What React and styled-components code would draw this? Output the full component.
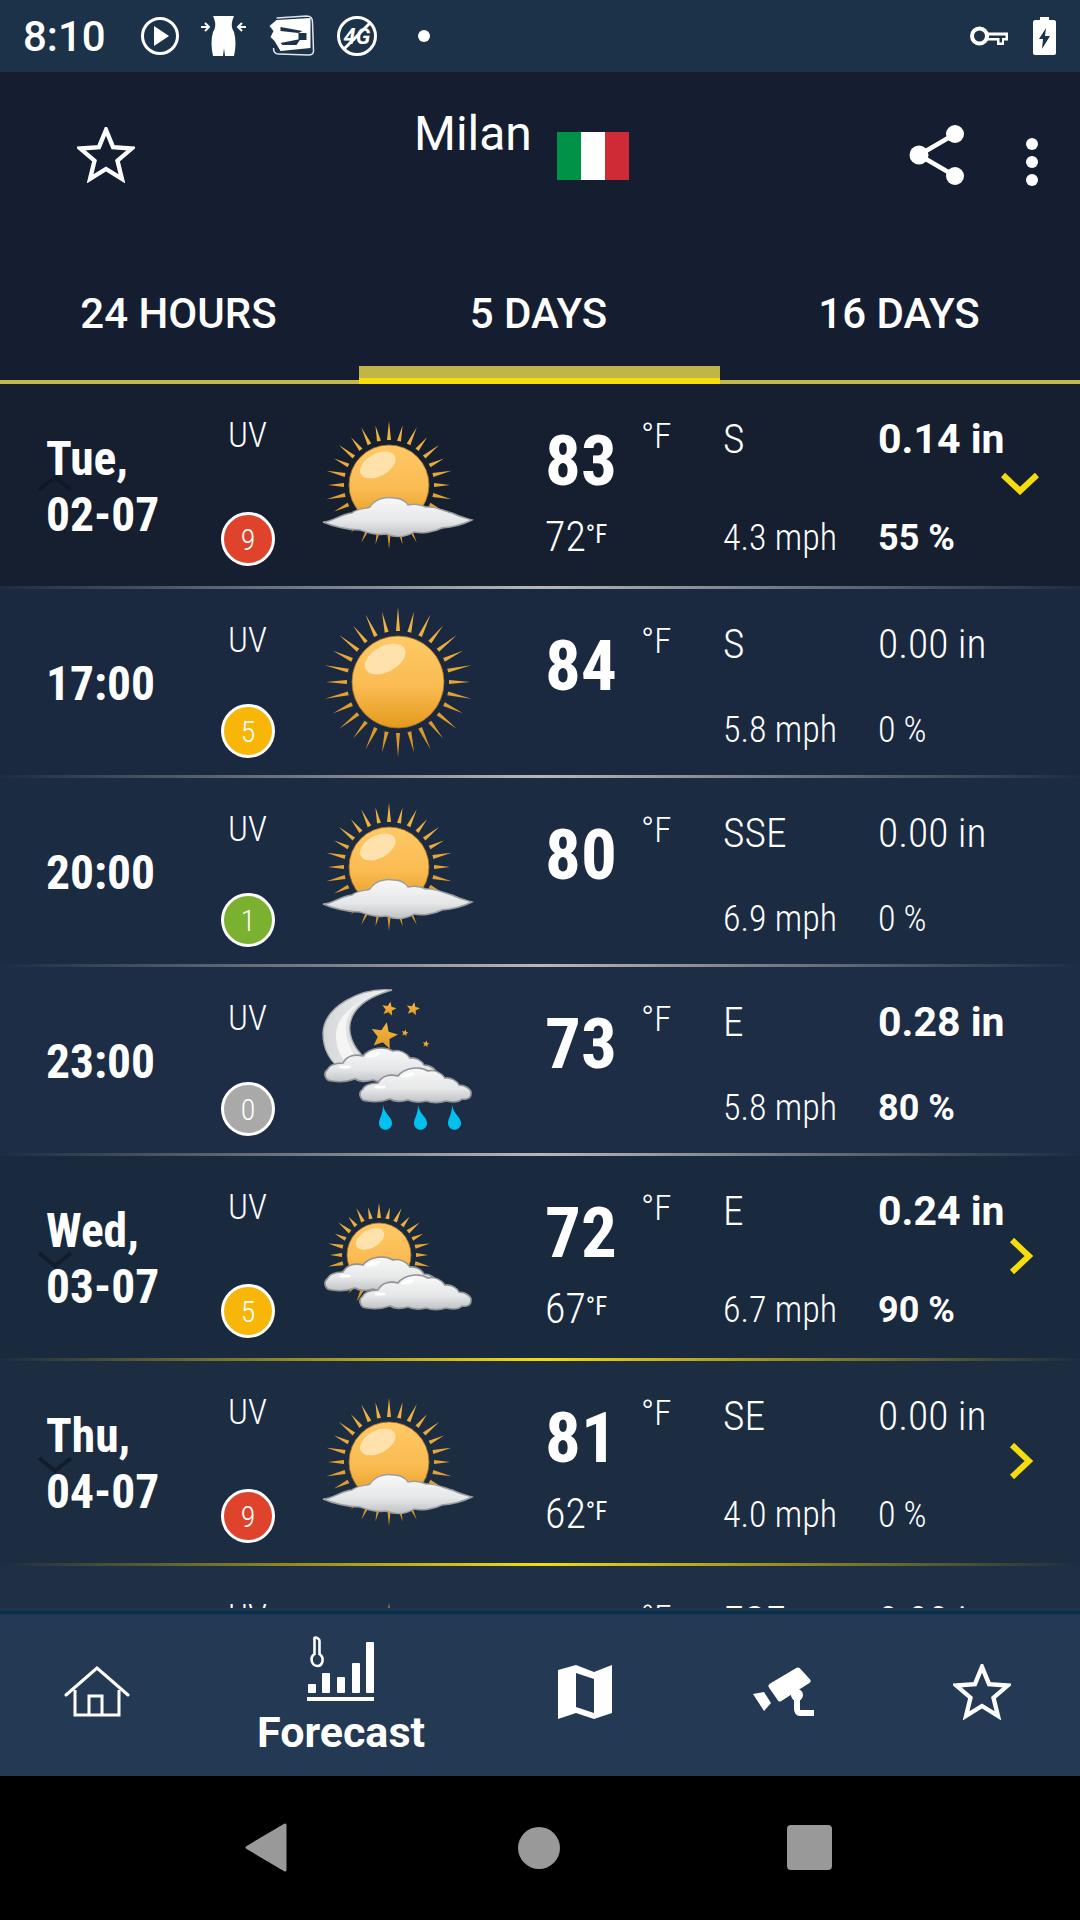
import React from "react";
import styled, { createGlobalStyle, css } from "styled-components";

const GlobalStyle = createGlobalStyle`
  html, body { margin: 0; padding: 0; background: #000; }
  body { font-family: Roboto, "Noto Sans", sans-serif; color: #fff; }
`;

const condensed = css`
  font-family: Roboto, sans-serif;
  font-stretch: 75%;
`;

const Screen = styled.div`
  width: 1080px;
  height: 1920px;
  display: flex;
  flex-direction: column;
  overflow: hidden;
`;

const StatusBar = styled.div`
  height: 72px;
  flex: none;
  background: #1c3249;
  display: flex;
  align-items: center;
  padding: 0 24px 0 23px;
  box-sizing: border-box;
`;

const Clock = styled.span`
  font-size: 42px;
  font-weight: 500;
  width: 117px;
`;

const StatusIcons = styled.div`
  display: flex;
  align-items: center;
  gap: 21px;
  flex: 1;
`;

const StatusDot = styled.div`
  width: 12px;
  height: 12px;
  margin-left: 19px;
  border-radius: 50%;
  background: #fff;
`;

const Header = styled.div`
  height: 168px;
  flex: none;
  background: #151e30;
  display: grid;
  grid-template-columns: 414px 143px 1fr auto;
  padding-right: 42px;
`;

const StarButton = styled.div`
  padding: 55px 0 0 77px;
`;

const City = styled.div`
  font-size: 48px;
  line-height: 56px;
  padding-top: 34px;
`;

const Flag = styled.div`
  width: 72px;
  height: 48px;
  margin-top: 60px;
  display: grid;
  grid-template-columns: repeat(3, 1fr);
`;

const FlagStripe = styled.div`
  background: ${(p) => p.$color};
`;

const HeaderActions = styled.div`
  display: flex;
  gap: 61px;
  padding-top: 53px;
  align-items: flex-start;
`;

const Dots = styled.div`
  display: flex;
  flex-direction: column;
  gap: 6px;
  padding-top: 13px;
`;

const Dot = styled.div`
  width: 12px;
  height: 12px;
  border-radius: 50%;
  background: #fff;
`;

const Tabs = styled.div`
  height: 144px;
  flex: none;
  background: #151e30;
  display: grid;
  grid-template-columns: 359px 361px 360px;
`;

const Tab = styled.div`
  font-size: 42px;
  font-weight: 500;
  text-align: center;
  line-height: 50px;
  padding: 49px 2px 0 0;
  box-sizing: border-box;
  ${(p) =>
    p.$active
      ? css`
          background: linear-gradient(#c2b548, #c2b548) 0 126px / 100% 12px no-repeat,
            linear-gradient(#f5dc0d, #f5dc0d) 0 138px / 100% 6px no-repeat;
        `
      : css`
          border-bottom: 4px solid #c5b84b;
        `}
`;

const List = styled.div`
  height: 1224px;
  flex: none;
  overflow: hidden;
  background: #1c2c42;
`;

const Row = styled.div`
  position: relative;
  height: ${(p) => (p.$tall ? 202 : 186)}px;
  background: ${(p) => p.$bg};
  display: grid;
  grid-template-columns: 175px 54px 270px 96px 82px 155px 1fr;
  grid-template-rows: ${(p) => (p.$tall ? 120 : 107)}px 1fr;
  padding-left: 46px;
  box-sizing: border-box;
`;

const Divider = styled.div`
  height: 3px;
  background: ${(p) =>
    p.$gold
      ? "linear-gradient(90deg, rgba(245,220,13,0) 0%, #f5dc0d 50%, rgba(245,220,13,0) 100%)"
      : "linear-gradient(90deg, rgba(190,190,190,0) 0%, #b8b8b8 50%, rgba(190,190,190,0) 100%)"};
`;

const DateCell = styled.div`
  ${condensed}
  grid-column: 1;
  grid-row: 1 / 3;
  align-self: center;
  font-size: 47.5px;
  font-weight: 700;
  line-height: 56px;
  padding-top: 4px;
  white-space: pre-line;
  position: relative;
`;

const UvLabel = styled.div`
  ${condensed}
  grid-column: 2;
  grid-row: 1;
  text-align: center;
  font-size: 35px;
  font-weight: 300;
  line-height: 40px;
  padding: 32px 1px 0 0;
`;

const Badge = styled.div`
  ${condensed}
  grid-column: 2;
  grid-row: 2;
  width: 54px;
  height: 54px;
  margin-top: 8px;
  box-sizing: border-box;
  border: 3px solid #fff;
  border-radius: 50%;
  background: ${(p) => p.$color};
  display: flex;
  align-items: center;
  justify-content: center;
  font-size: 30px;
  font-weight: 300;
`;

const IconCell = styled.div`
  grid-column: 3;
  grid-row: 1 / 3;
  padding: ${(p) => (p.$tall ? 26 : 14)}px 0 0 43px;
`;

const HighTemp = styled.div`
  ${condensed}
  grid-column: 4;
  grid-row: 1;
  font-size: 71px;
  font-weight: 700;
  line-height: 80px;
  padding-top: 37px;
`;

const LowTemp = styled.div`
  ${condensed}
  grid-column: 4;
  grid-row: 2;
  font-size: 42px;
  font-weight: 300;
  line-height: 48px;
  padding-top: 7px;
  white-space: nowrap;

  small {
    font-size: 25px;
    font-weight: 400;
    vertical-align: 8px;
  }
`;

const Unit = styled.div`
  ${condensed}
  grid-column: 5;
  grid-row: 1;
  font-size: 35px;
  font-weight: 300;
  line-height: 40px;
  padding-top: 33px;
`;

const TopValue = styled.div`
  ${condensed}
  grid-column: ${(p) => p.$col};
  grid-row: 1;
  font-size: ${(p) => (p.$bold ? 41 : 41.5)}px;
  font-stretch: ${(p) => (p.$bold ? 100 : 75)}%;
  font-weight: ${(p) => (p.$bold ? 700 : 300)};
  line-height: 44px;
  padding-top: 33px;
  white-space: nowrap;
`;

const BottomValue = styled.div`
  ${condensed}
  grid-column: ${(p) => p.$col};
  grid-row: 2;
  font-size: 36px;
  font-stretch: ${(p) => (p.$bold ? 100 : 75)}%;
  font-weight: ${(p) => (p.$bold ? 700 : 300)};
  line-height: 40px;
  padding-top: 14px;
  white-space: nowrap;
`;

const Chevron = styled.svg`
  position: absolute;
  left: ${(p) => p.$x}px;
  top: ${(p) => p.$y}px;
`;

const Nav = styled.div`
  height: 168px;
  flex: none;
  box-sizing: border-box;
  background: #243a54;
  border-top: 3px solid #20364f;
  position: relative;
  display: grid;
  grid-template-columns: 194px 294px 194px 202px 196px;
`;

const NavStripe = styled.div`
  position: absolute;
  top: 0;
  left: 0;
  right: 0;
  height: 3px;
  background: #04304c;
`;

const NavItem = styled.div`
  display: flex;
  flex-direction: column;
  align-items: center;
  padding-top: ${(p) => p.$top}px;
`;

const NavLabel = styled.div`
  font-size: 43px;
  font-weight: 700;
  line-height: 46px;
  margin-top: 7px;
`;

const SoftKeys = styled.div`
  flex: 1;
  background: #000;
  display: grid;
  grid-template-columns: 245px 273px 269px 1fr;
  padding-top: 47px;
`;

const BackKey = styled.svg`
  grid-column: 1 / 3;
  margin-left: 245px;
`;

const HomeKey = styled.div`
  grid-column: 3;
  width: 42px;
  height: 42px;
  margin-top: 4px;
  border-radius: 50%;
  background: #999;
`;

const RecentKey = styled.div`
  grid-column: 4;
  width: 45px;
  height: 45px;
  margin-top: 2px;
  border-radius: 4px;
  background: #999;
`;

const RAY_COUNT = 28;

const raysFor = (cx, cy, r1, r2, w) =>
  Array.from({ length: RAY_COUNT }, (_, i) => {
    const a = (i * 2 * Math.PI) / RAY_COUNT - Math.PI / 2;
    const len = i % 2 ? r2 - 3 : r2;
    const px = Math.cos(a + Math.PI / 2) * w;
    const py = Math.sin(a + Math.PI / 2) * w;
    const bx = cx + Math.cos(a) * r1;
    const by = cy + Math.sin(a) * r1;
    return `M${bx - px} ${by - py}L${cx + Math.cos(a) * len} ${cy + Math.sin(a) * len}L${bx + px} ${by + py}Z`;
  }).join("");

const Sun = ({ cx, cy, r, rayTo }) => (
  <g>
    <path d={raysFor(cx, cy, r + 5, rayTo, 2)} fill="url(#rayFill)" />
    <circle cx={cx} cy={cy} r={r} fill="url(#sunFill)" stroke="#a8701a" strokeWidth="0.8" />
    <ellipse
      cx={cx - r * 0.28}
      cy={cy - r * 0.5}
      rx={r * 0.48}
      ry={r * 0.28}
      fill="#ffe2ab"
      transform={`rotate(-28 ${cx - r * 0.28} ${cy - r * 0.5})`}
    />
  </g>
);

const PUFF =
  "M9 35C2 35 0 27 4 24C6 19 13 17 20 17C24 9 33 8 40 10C47 1 62 0 70 5C76 3 84 7 87 12C93 11 99 15 101 19C108 19 114 24 113 28C113 32 109 34 104 33C100 37 92 36 88 35C82 37 74 37 68 35C62 37 54 36 50 34C44 36 36 36 32 33C24 36 15 36 9 35Z";

const Puff = ({ x, y }) => (
  <g transform={`translate(${x} ${y})`}>
    <path d={PUFF} fill="url(#cloudFill)" stroke="#8f9296" strokeWidth="1.6" />
    <ellipse cx="50" cy="9" rx="7" ry="2" fill="#fff" transform="rotate(-12 50 9)" />
    <ellipse cx="22" cy="21" rx="6" ry="1.6" fill="#fff" />
  </g>
);

const Defs = () => (
  <svg width="0" height="0" style={{ position: "absolute" }}>
    <defs>
      <linearGradient id="sunFill" x1="0" y1="0" x2="0" y2="1">
        <stop offset="0" stopColor="#ffc966" />
        <stop offset="0.55" stopColor="#fabb52" />
        <stop offset="1" stopColor="#e39a1c" />
      </linearGradient>
      <linearGradient id="rayFill" x1="0" y1="0" x2="0" y2="1">
        <stop offset="0" stopColor="#f2b544" />
        <stop offset="1" stopColor="#d9921f" />
      </linearGradient>
      <linearGradient id="cloudFill" x1="0" y1="0" x2="0" y2="1">
        <stop offset="0" stopColor="#f8f8f8" />
        <stop offset="0.6" stopColor="#e6e7e8" />
        <stop offset="1" stopColor="#c0c2c5" />
      </linearGradient>
      <linearGradient id="moonFill" x1="0" y1="0" x2="1" y2="0">
        <stop offset="0" stopColor="#d6d7d9" />
        <stop offset="1" stopColor="#f4f4f4" />
      </linearGradient>
      <linearGradient id="starFill" x1="0" y1="0" x2="0" y2="1">
        <stop offset="0" stopColor="#f5b746" />
        <stop offset="1" stopColor="#e09a23" />
      </linearGradient>
    </defs>
  </svg>
);

const SunIcon = () => (
  <svg width="160" height="160" viewBox="0 0 160 160">
    <Sun cx={80} cy={79} r={46} rayTo={75} />
  </svg>
);

const SunCloudIcon = () => (
  <svg width="160" height="160" viewBox="0 0 160 160">
    <Sun cx={71} cy={75} r={40} rayTo={64} />
    <path
      d="M5 112C15 112 22 104 34 103C40 98 48 99 52 97C56 90 66 86 76 88C84 88 88 92 90 95C98 93 104 95 108 97C118 96 128 102 134 103C142 107 148 108 154 110C146 114 136 117 124 118C116 122 104 124 96 122C88 127 78 128 68 124C58 126 48 122 42 120C30 120 14 116 5 112Z"
      fill="url(#cloudFill)"
      stroke="#9a9da1"
      strokeWidth="1.4"
    />
  </svg>
);

const SunCloudsIcon = () => (
  <svg width="160" height="160" viewBox="0 0 160 160">
    <Sun cx={61} cy={73} r={32} rayTo={52} />
    <Puff x={5} y={73} />
    <Puff x={40} y={91} />
  </svg>
);

const starPath = (cx, cy, r) =>
  Array.from({ length: 10 }, (_, i) => {
    const a = (i * Math.PI) / 5 - Math.PI / 2 + 0.2;
    const d = i % 2 ? r * 0.45 : r;
    return `${i ? "L" : "M"}${cx + Math.cos(a) * d} ${cy + Math.sin(a) * d}`;
  }).join("") + "Z";

const MoonRainIcon = () => (
  <svg width="160" height="160" viewBox="0 0 160 160">
    <path
      d="M74 9C42 6 6 26 5 52C5 68 12 82 26 90L48 78C34 66 28 50 34 36C40 22 56 14 74 9Z"
      fill="url(#moonFill)"
      stroke="#a9abae"
      strokeWidth="1.4"
    />
    <path d="M56 14C36 22 18 36 18 54C18 66 22 76 30 84L40 78C28 64 24 46 32 32C37 24 46 18 56 14Z" fill="#f5f5f5" />
    {[
      [71, 28, 7.5],
      [95, 28, 7],
      [66, 55, 14],
      [87, 52, 3.6],
      [108, 63, 3.6],
    ].map(([x, y, r]) => (
      <path key={`${x}-${y}`} d={starPath(x, y, r)} fill="url(#starFill)" />
    ))}
    <Puff x={5} y={65} />
    <Puff x={40} y={85} />
    {[68, 103, 137].map((x) => (
      <path
        key={x}
        d={`M${x - 3} 124C${x - 1} 134 ${x + 6} 136 ${x + 6} 142C${x + 6} 151 ${x - 7} 151 ${x - 7} 142C${x - 7} 137 ${x - 3} 134 ${x - 3} 124Z`}
        fill="#00c0ee"
      />
    ))}
  </svg>
);

const weatherIcons = {
  sun: SunIcon,
  sunCloud: SunCloudIcon,
  sunClouds: SunCloudsIcon,
  moonRain: MoonRainIcon,
};

const UV_COLORS = { 9: "#e0432b", 5: "#f7b608", 1: "#7ab12f", 0: "#a9a9a9" };

const rows = [
  { date: "Tue,\n02-07", uv: 9, icon: "sunCloud", high: 83, low: 72, dir: "S", rain: "0.14 in", speed: "4.3 mph", chance: "55 %", bold: true, tall: true, bg: "#151f30", open: true },
  { date: "17:00", uv: 5, icon: "sun", high: 84, dir: "S", rain: "0.00 in", speed: "5.8 mph", chance: "0 %", bg: "#1a2940" },
  { date: "20:00", uv: 1, icon: "sunCloud", high: 80, dir: "SSE", rain: "0.00 in", speed: "6.9 mph", chance: "0 %", bg: "#1b2b42" },
  { date: "23:00", uv: 0, icon: "moonRain", high: 73, dir: "E", rain: "0.28 in", speed: "5.8 mph", chance: "80 %", bold: true, bg: "#1d2d45" },
  { date: "Wed,\n03-07", uv: 5, icon: "sunClouds", high: 72, low: 67, dir: "E", rain: "0.24 in", speed: "6.7 mph", chance: "90 %", bold: true, tall: true, bg: "#1a2a3e", gold: true, closed: true },
  { date: "Thu,\n04-07", uv: 9, icon: "sunCloud", high: 81, low: 62, dir: "SE", rain: "0.00 in", speed: "4.0 mph", chance: "0 %", tall: true, bg: "#1c2d42", gold: true, closed: true },
  // only the top of this row shows above the nav bar
  { icon: "sunCloud", dir: "ESE", rain: "0.00 in", tall: true, bg: "#1f3046" },
];

const ForecastRow = ({ data }) => {
  const Icon = weatherIcons[data.icon];
  return (
    <Row $tall={data.tall} $bg={data.bg}>
      {data.open && (
        <Chevron $x={37} $y={90} width="36" height="18" viewBox="0 0 36 18">
          <path d="M2 16L18 3L34 16" fill="none" stroke="#0f1826" strokeWidth="4" />
        </Chevron>
      )}
      {data.closed && (
        <Chevron $x={37} $y={95} width="36" height="18" viewBox="0 0 36 18">
          <path d="M2 2L18 15L34 2" fill="none" stroke="#111c2c" strokeWidth="4" />
        </Chevron>
      )}
      {data.date && <DateCell>{data.date}</DateCell>}
      <UvLabel>UV</UvLabel>
      {data.date && <Badge $color={UV_COLORS[data.uv]}>{data.uv}</Badge>}
      <IconCell $tall={data.tall}>
        <Icon />
      </IconCell>
      {data.high && <HighTemp>{data.high}</HighTemp>}
      {data.low && (
        <LowTemp>
          {data.low}
          <small>°F</small>
        </LowTemp>
      )}
      <Unit>°F</Unit>
      <TopValue $col={6}>{data.dir}</TopValue>
      {data.speed && <BottomValue $col={6}>{data.speed}</BottomValue>}
      <TopValue $col={7} $bold={data.bold}>{data.rain}</TopValue>
      {data.chance && <BottomValue $col={7} $bold={data.bold}>{data.chance}</BottomValue>}
      {data.open && (
        <Chevron $x={1001} $y={88} width="38" height="23" viewBox="0 0 38 23">
          <path d="M2 3L19 19L36 3" fill="none" stroke="#f5dc0d" strokeWidth="6" />
        </Chevron>
      )}
      {data.closed && (
        <Chevron $x={1009} $y={82} width="24" height="36" viewBox="0 0 24 36">
          <path d="M3 2L20 18L3 34" fill="none" stroke="#f5dc0d" strokeWidth="6" />
        </Chevron>
      )}
    </Row>
  );
};

const STAR = "30,3 37.3,20.9 56.6,22.3 41.9,34.9 46.5,53.7 30,43.5 13.5,53.7 18.1,34.9 3.4,22.3 22.7,20.9";

const StarIcon = () => (
  <svg width="58" height="56" viewBox="0 0 60 58">
    <polygon points={STAR} fill="none" stroke="#fff" strokeWidth="4.5" />
  </svg>
);

const ShareIcon = () => (
  <svg width="56" height="60" viewBox="0 0 56 60" fill="#fff">
    <path d="M10 30L46 9M10 30L46 51" stroke="#fff" strokeWidth="4.5" />
    <circle cx="10" cy="30" r="9.5" />
    <circle cx="46" cy="9" r="9" />
    <circle cx="46" cy="51" r="9" />
  </svg>
);

const PlayIcon = () => (
  <svg width="40" height="40" viewBox="0 0 40 40">
    <circle cx="20" cy="20" r="17.5" fill="none" stroke="#fff" strokeWidth="3" />
    <path d="M14 10L29 20L14 30Z" fill="#fff" />
  </svg>
);

const BodyIcon = () => (
  <svg width="46" height="42" viewBox="0 0 46 42" fill="#fff">
    <path d="M12 1H33C30 8 30 12 33 17C35 24 35 32 33 41H24L23 33L22 41H12C10 32 10 24 12 17C15 12 15 8 12 1Z" />
    <path d="M0 12H7M4 8L8 12L4 16M45 12H38M41 8L37 12L41 16" stroke="#fff" strokeWidth="2" fill="none" />
  </svg>
);

const PlaneIcon = () => (
  <svg width="47" height="42" viewBox="0 0 46 42">
    <path d="M8 3L38 1C43 1 44 4 44 7L45 36C45 39 43 40 40 40L10 39C6 39 5 36 5 33" fill="none" stroke="#dfe4ea" strokeWidth="1.5" />
    <path d="M8 5L42 3V22L42 33L12 36L6 26L2 22L5 16L1 11Z" fill="#fff" />
    <path d="M12 12L34 16L30 18L12 16ZM30 18H38V25H30ZM12 28L32 24L28 30H14Z" fill="#1c3249" />
  </svg>
);

const No4gIcon = () => (
  <svg width="42" height="42" viewBox="0 0 42 42">
    <circle cx="21" cy="21" r="18.5" fill="none" stroke="#fff" strokeWidth="3" />
    <path d="M8 34L34 8" stroke="#fff" strokeWidth="3" />
    <text x="21" y="29" textAnchor="middle" fontFamily="Roboto" fontSize="22" fontWeight="700" fontStyle="italic" fill="#fff">4G</text>
  </svg>
);

const KeyWrap = styled.div`
  margin-right: 25px;
  display: flex;
`;

const KeyIcon = () => (
  <KeyWrap>
    <svg width="38" height="20" viewBox="0 0 38 20">
      <circle cx="9.500" cy="10" r="7.500" fill="none" stroke="#fff" strokeWidth="4" />
      <path d="M17 6.500H38V14.500H34V19H27V14.500H17Z" fill="#fff" />
      <path d="M19 9.500H35.500V12H19ZM29.500 12H32V16.500H29.500Z" fill="#1c3249" />
    </svg>
  </KeyWrap>
);

const BatteryIcon = () => (
  <svg width="23" height="38" viewBox="0 0 23 38">
    <path d="M7 0H16V3H21C22 3 23 4 23 5V36C23 37 22 38 21 38H2C1 38 0 37 0 36V5C0 4 1 3 2 3H7Z" fill="#fff" />
    <path d="M13 11L6 22H10L9 32L17 19H12Z" fill="#1c3249" />
  </svg>
);

const HomeIcon = () => (
  <svg width="66" height="52" viewBox="0 0 66 52" fill="none" stroke="#fff" strokeWidth="3">
    <path d="M2 29L33 2L64 29" strokeLinecap="round" />
    <path d="M11 24V49H55V24" />
    <path d="M25 49V30H38V49" />
  </svg>
);

const ForecastIcon = () => (
  <svg width="68" height="66" viewBox="0 0 68 66" fill="#fff">
    <path d="M8 1.500C10 1.500 12.500 3 12.500 5V18C18 22 15.500 30 10.500 30C5 30 2 22 7.500 18V5C7.500 3 7 1.500 8 1.500Z" fill="none" stroke="#fff" strokeWidth="2.600" />
    <rect x="1" y="48" width="8" height="9" rx="1" />
    <rect x="15" y="37" width="8" height="20" rx="1" />
    <rect x="30" y="41" width="8" height="16" rx="1" />
    <rect x="45" y="27" width="8" height="30" rx="1" />
    <rect x="59" y="6" width="8" height="51" rx="1" />
    <rect x="0" y="61" width="67" height="4" />
  </svg>
);

const MapIcon = () => (
  <svg width="54" height="54" viewBox="0 0 54 54">
    <path
      fillRule="evenodd"
      fill="#fff"
      d="M0 5L18 0L36 7L54 0V48L36 54L18 48L0 54ZM18 8V42L36 48V14Z"
    />
  </svg>
);

const CameraIcon = () => (
  <svg width="61" height="49" viewBox="0 0 61 49" fill="#fff">
    <path d="M18 19L45 3L55 14L27 32Z" stroke="#fff" strokeWidth="5" strokeLinejoin="round" />
    <path d="M0 27L11 25L18 36L11 44Z" />
    <circle cx="44" cy="28" r="6" />
    <path d="M44 30V42C44 44 45 46 47 46H61" fill="none" stroke="#fff" strokeWidth="6" />
  </svg>
);

const flagStripes = ["#009246", "#ffffff", "#ce2b37"];

export default function App() {
  return (
    <Screen>
      <GlobalStyle />
      <Defs />
      <StatusBar>
        <Clock>8:10</Clock>
        <StatusIcons>
          <PlayIcon />
          <BodyIcon />
          <PlaneIcon />
          <No4gIcon />
          <StatusDot />
        </StatusIcons>
        <KeyIcon />
        <BatteryIcon />
      </StatusBar>
      <Header>
        <StarButton>
          <StarIcon />
        </StarButton>
        <City>Milan</City>
        <Flag>
          {flagStripes.map((c) => (
            <FlagStripe key={c} $color={c} />
          ))}
        </Flag>
        <HeaderActions>
          <ShareIcon />
          <Dots>
            <Dot />
            <Dot />
            <Dot />
          </Dots>
        </HeaderActions>
      </Header>
      <Tabs>
        <Tab>24 HOURS</Tab>
        <Tab $active>5 DAYS</Tab>
        <Tab>16 DAYS</Tab>
      </Tabs>
      <List>
        {rows.map((r, i) => (
          <React.Fragment key={i}>
            <ForecastRow data={r} />
            {i < rows.length - 1 && <Divider $gold={r.gold} />}
          </React.Fragment>
        ))}
      </List>
      <Nav>
        <NavStripe />
        <NavItem $top={55}>
          <HomeIcon />
        </NavItem>
        <NavItem $top={25}>
          <ForecastIcon />
          <NavLabel>Forecast</NavLabel>
        </NavItem>
        <NavItem $top={54}>
          <MapIcon />
        </NavItem>
        <NavItem $top={56}>
          <CameraIcon />
        </NavItem>
        <NavItem $top={53}>
          <StarIcon />
        </NavItem>
      </Nav>
      <SoftKeys>
        <BackKey width="42" height="49" viewBox="0 0 42 49">
          <path d="M40 2V47L2 24.500Z" fill="#999" stroke="#999" strokeWidth="3" strokeLinejoin="round" />
        </BackKey>
        <HomeKey />
        <RecentKey />
      </SoftKeys>
    </Screen>
  );
}
